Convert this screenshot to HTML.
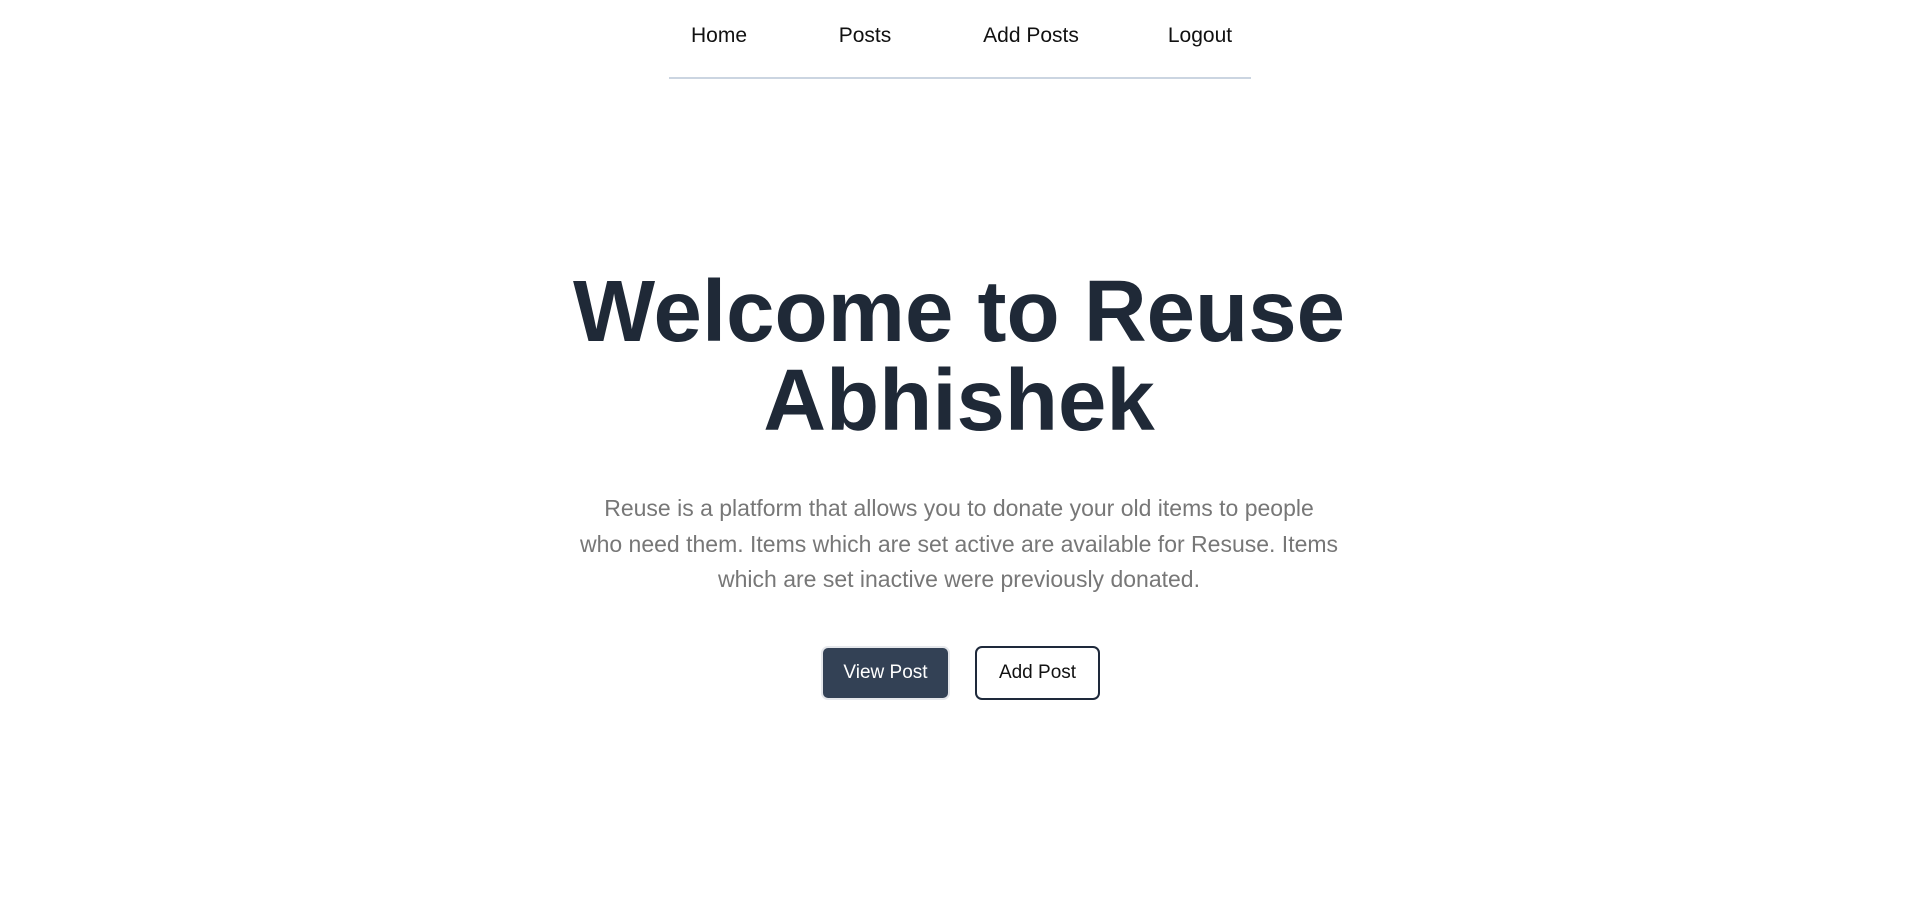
<!DOCTYPE html>
<html><head><meta charset="utf-8"><style>
body{margin:0;width:1918px;height:906px;background:#fff;font-family:"Liberation Sans",sans-serif;position:relative;overflow:hidden}
.nav a{position:absolute;top:24px;font-size:21px;color:#111;transform:translateX(-50%);white-space:nowrap}
.line{position:absolute;left:669px;top:77px;width:582px;height:2px;background:#cbd5e1}
h1{position:absolute;left:0;width:1918px;top:267px;margin:0;text-align:center;font-size:87px;line-height:89px;color:#1f2937;font-weight:bold}
p{position:absolute;left:0;width:1918px;top:491px;margin:0;text-align:center;font-size:23px;line-height:35.5px;color:#777;font-weight:300;white-space:nowrap}
.b{position:absolute;top:646px;height:54px;box-sizing:border-box;border-radius:7px;font-size:19px;display:flex;align-items:center;justify-content:center}
</style></head><body>
<div class="nav"><a style="left:719px">Home</a><a style="left:865px">Posts</a><a style="left:1031px">Add Posts</a><a style="left:1200px">Logout</a></div>
<div class="line"></div>
<h1>Welcome to Reuse<br>Abhishek</h1>
<p>Reuse is a platform that allows you to donate your old items to people<br>who need them. Items which are set active are available for Resuse. Items<br>which are set inactive were previously donated.</p>
<div class="b" style="left:821px;width:129px;background:#334155;color:#fff;border:2px solid #e5e7eb">View Post</div>
<div class="b" style="left:975px;width:125px;background:#fff;color:#111;border:2px solid #1e293b">Add Post</div>
</body></html>
